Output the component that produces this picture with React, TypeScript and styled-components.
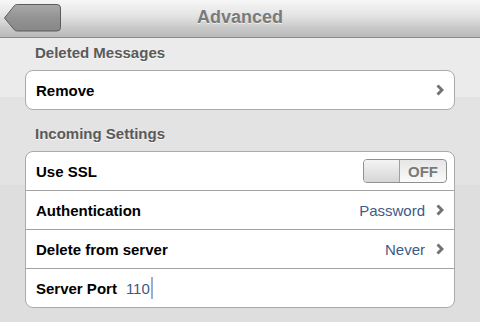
import styled, { createGlobalStyle } from 'styled-components';

const GlobalStyle = createGlobalStyle`
  html, body {
    margin: 0;
    padding: 0;
  }
  body {
    font-family: "Liberation Sans", Arial, sans-serif;
    background: linear-gradient(#ebebeb 0 97px, #e3e3e3 97px 185px, #dedede 185px);
    min-height: 322px;
  }
`;

const Chevron = () => (
  <svg width="8" height="12" viewBox="0 0 8 12">
    <polyline points="1.5,1.5 6,6 1.5,10.5" fill="none" stroke="#727272" strokeWidth="2.9" />
  </svg>
);

const BackShape = () => (
  <svg width="64" height="34" viewBox="0 0 64 34">
    <defs>
      <linearGradient id="bk" x1="0" y1="0" x2="0" y2="1">
        <stop offset="0" stopColor="#a9a9a9" />
        <stop offset="0.5" stopColor="#939393" />
        <stop offset="1" stopColor="#878787" />
      </linearGradient>
    </defs>
    <path
      d="M4.5 18 L14.5 5.5 Q15.5 4.5 17.5 4.5 L57 4.5 Q60.5 4.5 60.5 8 L60.5 27.5 Q60.5 31 57 31 L17.5 31 Q15.5 31 14.5 30 Z"
      fill="url(#bk)"
      stroke="#5c5c5c"
      strokeWidth="1"
    />
  </svg>
);

type Row = {
  label: string;
  value?: string;
  chevron?: boolean;
  toggle?: boolean;
  field?: string;
};

const sections: { title: string; rows: Row[] }[] = [
  { title: 'Deleted Messages', rows: [{ label: 'Remove', chevron: true }] },
  {
    title: 'Incoming Settings',
    rows: [
      { label: 'Use SSL', toggle: true },
      { label: 'Authentication', value: 'Password', chevron: true },
      { label: 'Delete from server', value: 'Never', chevron: true },
      { label: 'Server Port', field: '110' },
    ],
  },
];

export default function App() {
  return (
    <>
      <GlobalStyle />
      <NavBar>
        <BackButton>
          <BackShape />
        </BackButton>
        <Title>Advanced</Title>
      </NavBar>
      <Content>
        {sections.map((s, i) => (
          <Section key={s.title} first={i === 0}>
            <SectionTitle>{s.title}</SectionTitle>
            <Group>
              {s.rows.map((r) => (
                <Cell key={r.label}>
                  <Label>{r.label}</Label>
                  {r.field !== undefined && (
                    <Field>
                      {r.field}
                      <Caret />
                    </Field>
                  )}
                  <Spacer />
                  {r.value && <Value>{r.value}</Value>}
                  {r.chevron && (
                    <ChevronWrap>
                      <Chevron />
                    </ChevronWrap>
                  )}
                  {r.toggle && (
                    <Switch>
                      <Knob />
                      <SwitchText>OFF</SwitchText>
                    </Switch>
                  )}
                </Cell>
              ))}
            </Group>
          </Section>
        ))}
      </Content>
    </>
  );
}

const NavBar = styled.div`
  position: relative;
  height: 37px;
  border-bottom: 1px solid #8c8c8c;
  background: linear-gradient(#f7f7f7 0%, #e2e2e2 45%, #c9c9c9 75%, #b9b9b9 100%);
  display: flex;
  align-items: center;
  justify-content: center;
`;

const BackButton = styled.div`
  position: absolute;
  left: 0;
  top: 0;
  width: 64px;
  height: 34px;
`;

const Title = styled.div`
  font-size: 18px;
  font-weight: bold;
  color: #7a7a7a;
  text-shadow: 0 1px 0 rgba(255, 255, 255, 0.6);
  margin-top: -2px;
`;

const Content = styled.div`
  padding: 0 25px;
`;

const Section = styled.div<{ first: boolean }>`
  margin-top: ${({ first }) => (first ? '6px' : '15px')};
`;

const SectionTitle = styled.div`
  padding-left: 10px;
  font-size: 15px;
  line-height: 18px;
  font-weight: bold;
  color: #5a5a5a;
  text-shadow: 0 1px 0 rgba(255, 255, 255, 0.7);
  margin-bottom: 8px;
`;

const Group = styled.div`
  background: #fff;
  border: 1px solid #aaaaaa;
  border-radius: 8px;
  overflow: hidden;
`;

const Cell = styled.div`
  height: 38px;
  display: flex;
  align-items: center;
  padding: 0 10px;
  & + & {
    border-top: 1px solid #a3a3a3;
  }
`;

const Label = styled.span`
  font-size: 15px;
  font-weight: bold;
  color: #000;
`;

const Spacer = styled.div`
  flex: 1;
`;

const Value = styled.span`
  font-size: 15px;
  color: #3d5a88;
`;

const ChevronWrap = styled.span`
  display: flex;
  margin-left: 11px;
`;

const Field = styled.span`
  display: flex;
  align-items: center;
  margin-left: 9px;
  font-size: 15px;
  color: #3d5a88;
`;

const Caret = styled.span`
  width: 2px;
  height: 22px;
  margin-left: 1px;
  background: #8fb2e3;
`;

const Switch = styled.div`
  width: 82px;
  height: 22px;
  border: 1px solid #909090;
  border-radius: 4px;
  display: flex;
  overflow: hidden;
  background: linear-gradient(#e6e6e6, #fafafa);
  margin-right: -3px;
`;

const Knob = styled.div`
  width: 35px;
  border-right: 1px solid #a0a0a0;
  background: linear-gradient(#f4f4f4, #d6d6d6);
`;

const SwitchText = styled.span`
  flex: 1;
  display: flex;
  align-items: center;
  justify-content: center;
  font-size: 15px;
  font-weight: bold;
  color: #7a7a7a;
`;
